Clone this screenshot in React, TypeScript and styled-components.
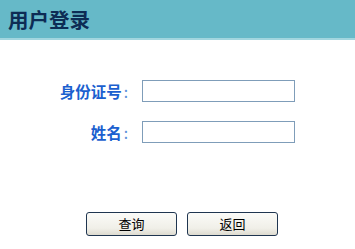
import React from "react";
import styled, { createGlobalStyle } from "styled-components";

const GlobalStyle = createGlobalStyle`
  html, body {
    margin: 0;
    padding: 0;
    background: #ffffff;
  }
  body {
    font-family: "Noto Sans CJK SC", "Noto Sans", sans-serif;
  }
`;

const Page = styled.div`
  width: 355px;
  height: 249px;
  overflow: hidden;
`;

const Header = styled.div`
  height: 38px;
  background: #66b9c8;
  border-bottom: 2px solid #a2d6df;
  display: flex;
  align-items: center;
  padding-left: 8px;
`;

const Title = styled.h1`
  margin: 0;
  font-size: 20.5px;
  font-weight: 700;
  color: #0d2c55;
  line-height: 1;
`;

const Form = styled.div`
  display: grid;
  grid-template-columns: 128px 153px;
  column-gap: 14px;
  row-gap: 19px;
  align-items: center;
  padding-top: 40px;
`;

const Label = styled.label`
  text-align: right;
  font-size: 15.5px;
  font-weight: 700;
  color: #1b5fcf;
  line-height: 22px;
  white-space: nowrap;
`;

const Colon = styled.span`
  font-weight: 400;
  color: #5a8fd8;
  margin-left: 2px;
`;

const Input = styled.input`
  box-sizing: border-box;
  width: 153px;
  height: 22px;
  margin: 0;
  border: 1px solid #7f9db9;
  background: #ffffff;
  padding: 0 3px;
  outline: none;
`;

const Actions = styled.div`
  display: flex;
  gap: 10px;
  padding-left: 86px;
  padding-top: 69px;
`;

const Button = styled.button`
  box-sizing: border-box;
  width: 91px;
  height: 24px;
  margin: 0;
  padding: 0;
  border: 1px solid #1f3550;
  border-radius: 3px;
  background: linear-gradient(#fbfbf8, #f0efe8 70%, #dedbd0);
  font-family: "Noto Sans CJK SC", sans-serif;
  font-size: 13px;
  color: #000000;
  line-height: 22px;
`;

export default function App() {
  return (
    <Page>
      <GlobalStyle />
      <Header>
        <Title>用户登录</Title>
      </Header>
      <Form>
        <Label htmlFor="idno">
          身份证号<Colon>:</Colon>
        </Label>
        <Input id="idno" type="text" />
        <Label htmlFor="name">
          姓名<Colon>:</Colon>
        </Label>
        <Input id="name" type="text" />
      </Form>
      <Actions>
        <Button type="button">查询</Button>
        <Button type="button">返回</Button>
      </Actions>
    </Page>
  );
}
